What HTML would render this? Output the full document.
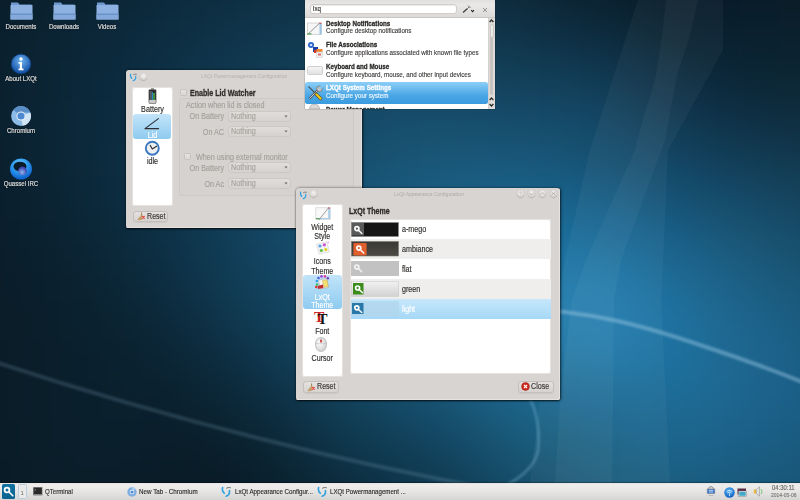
<!DOCTYPE html>
<html><head><meta charset="utf-8">
<style>
*{margin:0;padding:0;box-sizing:border-box}
html,body{width:800px;height:500px;overflow:hidden}
body{position:relative;font-family:"Liberation Sans",sans-serif;background:#0f3550}
.abs{position:absolute}
.tx{position:absolute;white-space:nowrap;-webkit-text-stroke:0.15px currentColor}
#wall{position:absolute;left:0;top:0}
.dt{text-shadow:0 0 1px #000,0 0 2px #000}

.win{position:absolute;background:#d8d4d1;border-radius:3px 3px 2px 2px;box-shadow:inset -1px -1px 0 #e6e2df,0 1px 2px rgba(0,0,0,.7),1px 0 3px rgba(0,0,0,.55)}
.wl{position:absolute;background:#fff;border-radius:3px;box-shadow:inset 0 0 0 1px #e4e1de}
.btn{position:absolute;border:1px solid #c3bfbc;border-radius:3px;background:linear-gradient(#e4e1df,#d6d2cf);box-shadow:0 1px 1px rgba(0,0,0,.06)}
.combo{position:absolute;border:1px solid #ccc8c5;border-radius:3px;background:linear-gradient(#e0ddda,#d6d2cf)}
.chk{position:absolute;border:1px solid #c6c2bf;border-radius:1.5px;background:linear-gradient(#e6e4e2,#d9d6d3)}
.tb{position:absolute;border-radius:50%;background:radial-gradient(circle at 50% 40%,#f6f5f4 0,#e2dfdd 45%,#c4c1be 100%);box-shadow:0 0.5px 1px rgba(0,0,0,.3)}
.sel{position:absolute;border-radius:3px;background:linear-gradient(#c2e4f9,#8fcbf0)}
</style></head><body>
<svg id="wall" width="800" height="500" viewBox="0 0 800 500">
<defs>
<filter id="fblur" x="-10%" y="-10%" width="120%" height="120%" color-interpolation-filters="sRGB"><feGaussianBlur stdDeviation="22"/></filter>
<filter id="bl05" color-interpolation-filters="sRGB"><feGaussianBlur stdDeviation="0.6"/></filter>
<filter id="bl1" color-interpolation-filters="sRGB"><feGaussianBlur stdDeviation="1"/></filter>
</defs>
<g filter="url(#fblur)"><rect x="-60" y="-60" width="41" height="41" fill="#091a24"/><rect x="-20" y="-60" width="41" height="41" fill="#091d28"/><rect x="20" y="-60" width="41" height="41" fill="#0a1f2c"/><rect x="60" y="-60" width="41" height="41" fill="#0a212f"/><rect x="100" y="-60" width="41" height="41" fill="#0b2433"/><rect x="140" y="-60" width="41" height="41" fill="#0b2636"/><rect x="180" y="-60" width="41" height="41" fill="#0c2939"/><rect x="220" y="-60" width="41" height="41" fill="#0d2b3c"/><rect x="260" y="-60" width="41" height="41" fill="#0e2c3e"/><rect x="300" y="-60" width="41" height="41" fill="#0e2d3e"/><rect x="340" y="-60" width="41" height="41" fill="#0e2d3e"/><rect x="380" y="-60" width="41" height="41" fill="#0e2b3c"/><rect x="420" y="-60" width="41" height="41" fill="#0e2938"/><rect x="460" y="-60" width="41" height="41" fill="#0d2634"/><rect x="500" y="-60" width="41" height="41" fill="#0c222f"/><rect x="540" y="-60" width="41" height="41" fill="#0a1e2a"/><rect x="580" y="-60" width="41" height="41" fill="#081b26"/><rect x="620" y="-60" width="41" height="41" fill="#071822"/><rect x="660" y="-60" width="41" height="41" fill="#061620"/><rect x="700" y="-60" width="41" height="41" fill="#061622"/><rect x="740" y="-60" width="41" height="41" fill="#071723"/><rect x="780" y="-60" width="41" height="41" fill="#081823"/><rect x="820" y="-60" width="41" height="41" fill="#091922"/><rect x="860" y="-60" width="41" height="41" fill="#091921"/><rect x="-60" y="-20" width="41" height="41" fill="#091c27"/><rect x="-20" y="-20" width="41" height="41" fill="#0a1e2b"/><rect x="20" y="-20" width="41" height="41" fill="#0a212f"/><rect x="60" y="-20" width="41" height="41" fill="#0b2433"/><rect x="100" y="-20" width="41" height="41" fill="#0b2738"/><rect x="140" y="-20" width="41" height="41" fill="#0c2a3c"/><rect x="180" y="-20" width="41" height="41" fill="#0d2d40"/><rect x="220" y="-20" width="41" height="41" fill="#0e3044"/><rect x="260" y="-20" width="41" height="41" fill="#0f3246"/><rect x="300" y="-20" width="41" height="41" fill="#103448"/><rect x="340" y="-20" width="41" height="41" fill="#103448"/><rect x="380" y="-20" width="41" height="41" fill="#103347"/><rect x="420" y="-20" width="41" height="41" fill="#103144"/><rect x="460" y="-20" width="41" height="41" fill="#0f2e40"/><rect x="500" y="-20" width="41" height="41" fill="#0e2a3b"/><rect x="540" y="-20" width="41" height="41" fill="#0c2636"/><rect x="580" y="-20" width="41" height="41" fill="#0b2231"/><rect x="620" y="-20" width="41" height="41" fill="#091f2c"/><rect x="660" y="-20" width="41" height="41" fill="#061a27"/><rect x="700" y="-20" width="41" height="41" fill="#081b2a"/><rect x="740" y="-20" width="41" height="41" fill="#091c2a"/><rect x="780" y="-20" width="41" height="41" fill="#0a1d29"/><rect x="820" y="-20" width="41" height="41" fill="#0a1e28"/><rect x="860" y="-20" width="41" height="41" fill="#0b1e28"/><rect x="-60" y="20" width="41" height="41" fill="#0a1d29"/><rect x="-20" y="20" width="41" height="41" fill="#0a202d"/><rect x="20" y="20" width="41" height="41" fill="#0b2332"/><rect x="60" y="20" width="41" height="41" fill="#0b2637"/><rect x="100" y="20" width="41" height="41" fill="#0c293b"/><rect x="140" y="20" width="41" height="41" fill="#0d2d41"/><rect x="180" y="20" width="41" height="41" fill="#0e3146"/><rect x="220" y="20" width="41" height="41" fill="#10354b"/><rect x="260" y="20" width="41" height="41" fill="#11384f"/><rect x="300" y="20" width="41" height="41" fill="#123b52"/><rect x="340" y="20" width="41" height="41" fill="#123c53"/><rect x="380" y="20" width="41" height="41" fill="#123c53"/><rect x="420" y="20" width="41" height="41" fill="#123a51"/><rect x="460" y="20" width="41" height="41" fill="#11384e"/><rect x="500" y="20" width="41" height="41" fill="#10354a"/><rect x="540" y="20" width="41" height="41" fill="#0f3045"/><rect x="580" y="20" width="41" height="41" fill="#0d2d40"/><rect x="620" y="20" width="41" height="41" fill="#0c283a"/><rect x="660" y="20" width="41" height="41" fill="#092231"/><rect x="700" y="20" width="41" height="41" fill="#092131"/><rect x="740" y="20" width="41" height="41" fill="#0a212f"/><rect x="780" y="20" width="41" height="41" fill="#0b212e"/><rect x="820" y="20" width="41" height="41" fill="#0c222e"/><rect x="860" y="20" width="41" height="41" fill="#0c222e"/><rect x="-60" y="60" width="41" height="41" fill="#0a1d2a"/><rect x="-20" y="60" width="41" height="41" fill="#0a202f"/><rect x="20" y="60" width="41" height="41" fill="#0b2434"/><rect x="60" y="60" width="41" height="41" fill="#0b2739"/><rect x="100" y="60" width="41" height="41" fill="#0c2b3f"/><rect x="140" y="60" width="41" height="41" fill="#0d3045"/><rect x="180" y="60" width="41" height="41" fill="#0f354b"/><rect x="220" y="60" width="41" height="41" fill="#113951"/><rect x="260" y="60" width="41" height="41" fill="#123e57"/><rect x="300" y="60" width="41" height="41" fill="#13415b"/><rect x="340" y="60" width="41" height="41" fill="#14435e"/><rect x="380" y="60" width="41" height="41" fill="#15455f"/><rect x="420" y="60" width="41" height="41" fill="#14445f"/><rect x="460" y="60" width="41" height="41" fill="#14435d"/><rect x="500" y="60" width="41" height="41" fill="#13405a"/><rect x="540" y="60" width="41" height="41" fill="#123f59"/><rect x="580" y="60" width="41" height="41" fill="#113b55"/><rect x="620" y="60" width="41" height="41" fill="#10344b"/><rect x="660" y="60" width="41" height="41" fill="#0d2d41"/><rect x="700" y="60" width="41" height="41" fill="#0c283a"/><rect x="740" y="60" width="41" height="41" fill="#0b2534"/><rect x="780" y="60" width="41" height="41" fill="#0c2634"/><rect x="820" y="60" width="41" height="41" fill="#0d2735"/><rect x="860" y="60" width="41" height="41" fill="#0e2836"/><rect x="-60" y="100" width="41" height="41" fill="#0a1e2a"/><rect x="-20" y="100" width="41" height="41" fill="#0a212f"/><rect x="20" y="100" width="41" height="41" fill="#0b2435"/><rect x="60" y="100" width="41" height="41" fill="#0c283a"/><rect x="100" y="100" width="41" height="41" fill="#0c2c40"/><rect x="140" y="100" width="41" height="41" fill="#0e3247"/><rect x="180" y="100" width="41" height="41" fill="#0f374f"/><rect x="220" y="100" width="41" height="41" fill="#113d56"/><rect x="260" y="100" width="41" height="41" fill="#13425d"/><rect x="300" y="100" width="41" height="41" fill="#154763"/><rect x="340" y="100" width="41" height="41" fill="#164b68"/><rect x="380" y="100" width="41" height="41" fill="#174d6b"/><rect x="420" y="100" width="41" height="41" fill="#174e6c"/><rect x="460" y="100" width="41" height="41" fill="#164d6b"/><rect x="500" y="100" width="41" height="41" fill="#164b6a"/><rect x="540" y="100" width="41" height="41" fill="#154a68"/><rect x="580" y="100" width="41" height="41" fill="#144765"/><rect x="620" y="100" width="41" height="41" fill="#13405b"/><rect x="660" y="100" width="41" height="41" fill="#113851"/><rect x="700" y="100" width="41" height="41" fill="#0f3349"/><rect x="740" y="100" width="41" height="41" fill="#0f2f43"/><rect x="780" y="100" width="41" height="41" fill="#0f2e40"/><rect x="820" y="100" width="41" height="41" fill="#0f2e40"/><rect x="860" y="100" width="41" height="41" fill="#102e3f"/><rect x="-60" y="140" width="41" height="41" fill="#0a1d2a"/><rect x="-20" y="140" width="41" height="41" fill="#0a202e"/><rect x="20" y="140" width="41" height="41" fill="#0b2434"/><rect x="60" y="140" width="41" height="41" fill="#0c283a"/><rect x="100" y="140" width="41" height="41" fill="#0d2d41"/><rect x="140" y="140" width="41" height="41" fill="#0e3248"/><rect x="180" y="140" width="41" height="41" fill="#103951"/><rect x="220" y="140" width="41" height="41" fill="#123f5a"/><rect x="260" y="140" width="41" height="41" fill="#144662"/><rect x="300" y="140" width="41" height="41" fill="#154b6a"/><rect x="340" y="140" width="41" height="41" fill="#175070"/><rect x="380" y="140" width="41" height="41" fill="#185475"/><rect x="420" y="140" width="41" height="41" fill="#195778"/><rect x="460" y="140" width="41" height="41" fill="#19577a"/><rect x="500" y="140" width="41" height="41" fill="#18577a"/><rect x="540" y="140" width="41" height="41" fill="#175578"/><rect x="580" y="140" width="41" height="41" fill="#165172"/><rect x="620" y="140" width="41" height="41" fill="#144b6b"/><rect x="660" y="140" width="41" height="41" fill="#134462"/><rect x="700" y="140" width="41" height="41" fill="#123f5a"/><rect x="740" y="140" width="41" height="41" fill="#123b54"/><rect x="780" y="140" width="41" height="41" fill="#12394f"/><rect x="820" y="140" width="41" height="41" fill="#12374c"/><rect x="860" y="140" width="41" height="41" fill="#12364a"/><rect x="-60" y="180" width="41" height="41" fill="#0a1d29"/><rect x="-20" y="180" width="41" height="41" fill="#0a1f2d"/><rect x="20" y="180" width="41" height="41" fill="#0b2232"/><rect x="60" y="180" width="41" height="41" fill="#0b2738"/><rect x="100" y="180" width="41" height="41" fill="#0c2c3f"/><rect x="140" y="180" width="41" height="41" fill="#0e3248"/><rect x="180" y="180" width="41" height="41" fill="#103951"/><rect x="220" y="180" width="41" height="41" fill="#12405c"/><rect x="260" y="180" width="41" height="41" fill="#144865"/><rect x="300" y="180" width="41" height="41" fill="#164f6e"/><rect x="340" y="180" width="41" height="41" fill="#185576"/><rect x="380" y="180" width="41" height="41" fill="#195a7d"/><rect x="420" y="180" width="41" height="41" fill="#1b5e83"/><rect x="460" y="180" width="41" height="41" fill="#1b6187"/><rect x="500" y="180" width="41" height="41" fill="#1b638a"/><rect x="540" y="180" width="41" height="41" fill="#19628a"/><rect x="580" y="180" width="41" height="41" fill="#175e87"/><rect x="620" y="180" width="41" height="41" fill="#15587e"/><rect x="660" y="180" width="41" height="41" fill="#155174"/><rect x="700" y="180" width="41" height="41" fill="#154c6c"/><rect x="740" y="180" width="41" height="41" fill="#154864"/><rect x="780" y="180" width="41" height="41" fill="#15445e"/><rect x="820" y="180" width="41" height="41" fill="#144059"/><rect x="860" y="180" width="41" height="41" fill="#143e55"/><rect x="-60" y="220" width="41" height="41" fill="#091c27"/><rect x="-20" y="220" width="41" height="41" fill="#0a1e2b"/><rect x="20" y="220" width="41" height="41" fill="#0a212f"/><rect x="60" y="220" width="41" height="41" fill="#0b2535"/><rect x="100" y="220" width="41" height="41" fill="#0c2a3c"/><rect x="140" y="220" width="41" height="41" fill="#0d3045"/><rect x="180" y="220" width="41" height="41" fill="#0f3850"/><rect x="220" y="220" width="41" height="41" fill="#12405b"/><rect x="260" y="220" width="41" height="41" fill="#144866"/><rect x="300" y="220" width="41" height="41" fill="#165070"/><rect x="340" y="220" width="41" height="41" fill="#185779"/><rect x="380" y="220" width="41" height="41" fill="#1a5d82"/><rect x="420" y="220" width="41" height="41" fill="#1c638a"/><rect x="460" y="220" width="41" height="41" fill="#1d6992"/><rect x="500" y="220" width="41" height="41" fill="#1d6d99"/><rect x="540" y="220" width="41" height="41" fill="#1c6f9d"/><rect x="580" y="220" width="41" height="41" fill="#1a6d9b"/><rect x="620" y="220" width="41" height="41" fill="#196692"/><rect x="660" y="220" width="41" height="41" fill="#1a5f86"/><rect x="700" y="220" width="41" height="41" fill="#1a597b"/><rect x="740" y="220" width="41" height="41" fill="#195373"/><rect x="780" y="220" width="41" height="41" fill="#174e6c"/><rect x="820" y="220" width="41" height="41" fill="#164965"/><rect x="860" y="220" width="41" height="41" fill="#164560"/><rect x="-60" y="260" width="41" height="41" fill="#091b26"/><rect x="-20" y="260" width="41" height="41" fill="#0a1d29"/><rect x="20" y="260" width="41" height="41" fill="#0a1f2d"/><rect x="60" y="260" width="41" height="41" fill="#0b2231"/><rect x="100" y="260" width="41" height="41" fill="#0b2737"/><rect x="140" y="260" width="41" height="41" fill="#0d2d40"/><rect x="180" y="260" width="41" height="41" fill="#0f354b"/><rect x="220" y="260" width="41" height="41" fill="#113e58"/><rect x="260" y="260" width="41" height="41" fill="#134663"/><rect x="300" y="260" width="41" height="41" fill="#164e6e"/><rect x="340" y="260" width="41" height="41" fill="#185678"/><rect x="380" y="260" width="41" height="41" fill="#1a5e82"/><rect x="420" y="260" width="41" height="41" fill="#1c658d"/><rect x="460" y="260" width="41" height="41" fill="#1e6d97"/><rect x="500" y="260" width="41" height="41" fill="#2074a2"/><rect x="540" y="260" width="41" height="41" fill="#2079a9"/><rect x="580" y="260" width="41" height="41" fill="#1f79aa"/><rect x="620" y="260" width="41" height="41" fill="#1e72a2"/><rect x="660" y="260" width="41" height="41" fill="#1e6a95"/><rect x="700" y="260" width="41" height="41" fill="#1d6389"/><rect x="740" y="260" width="41" height="41" fill="#1b5c7f"/><rect x="780" y="260" width="41" height="41" fill="#195677"/><rect x="820" y="260" width="41" height="41" fill="#185170"/><rect x="860" y="260" width="41" height="41" fill="#174c69"/><rect x="-60" y="300" width="41" height="41" fill="#091b25"/><rect x="-20" y="300" width="41" height="41" fill="#0a1d28"/><rect x="20" y="300" width="41" height="41" fill="#0a1e2b"/><rect x="60" y="300" width="41" height="41" fill="#0a212e"/><rect x="100" y="300" width="41" height="41" fill="#0b2433"/><rect x="140" y="300" width="41" height="41" fill="#0c283a"/><rect x="180" y="300" width="41" height="41" fill="#0e3044"/><rect x="220" y="300" width="41" height="41" fill="#103950"/><rect x="260" y="300" width="41" height="41" fill="#12415c"/><rect x="300" y="300" width="41" height="41" fill="#144a68"/><rect x="340" y="300" width="41" height="41" fill="#175273"/><rect x="380" y="300" width="41" height="41" fill="#195b7e"/><rect x="420" y="300" width="41" height="41" fill="#1c638a"/><rect x="460" y="300" width="41" height="41" fill="#1e6c96"/><rect x="500" y="300" width="41" height="41" fill="#2175a2"/><rect x="540" y="300" width="41" height="41" fill="#237dad"/><rect x="580" y="300" width="41" height="41" fill="#237eb0"/><rect x="620" y="300" width="41" height="41" fill="#2078a9"/><rect x="660" y="300" width="41" height="41" fill="#1f709e"/><rect x="700" y="300" width="41" height="41" fill="#1e6993"/><rect x="740" y="300" width="41" height="41" fill="#1c6289"/><rect x="780" y="300" width="41" height="41" fill="#1b5c80"/><rect x="820" y="300" width="41" height="41" fill="#195678"/><rect x="860" y="300" width="41" height="41" fill="#185171"/><rect x="-60" y="340" width="41" height="41" fill="#091b25"/><rect x="-20" y="340" width="41" height="41" fill="#0a1c28"/><rect x="20" y="340" width="41" height="41" fill="#0a1e2a"/><rect x="60" y="340" width="41" height="41" fill="#0a1f2d"/><rect x="100" y="340" width="41" height="41" fill="#0a212f"/><rect x="140" y="340" width="41" height="41" fill="#0b2433"/><rect x="180" y="340" width="41" height="41" fill="#0c293a"/><rect x="220" y="340" width="41" height="41" fill="#0e3145"/><rect x="260" y="340" width="41" height="41" fill="#103a52"/><rect x="300" y="340" width="41" height="41" fill="#13435e"/><rect x="340" y="340" width="41" height="41" fill="#154c6a"/><rect x="380" y="340" width="41" height="41" fill="#175475"/><rect x="420" y="340" width="41" height="41" fill="#1a5d81"/><rect x="460" y="340" width="41" height="41" fill="#1d668d"/><rect x="500" y="340" width="41" height="41" fill="#1f6f99"/><rect x="540" y="340" width="41" height="41" fill="#2176a3"/><rect x="580" y="340" width="41" height="41" fill="#2077a7"/><rect x="620" y="340" width="41" height="41" fill="#1e74a4"/><rect x="660" y="340" width="41" height="41" fill="#1e709d"/><rect x="700" y="340" width="41" height="41" fill="#1e6a95"/><rect x="740" y="340" width="41" height="41" fill="#1d658e"/><rect x="780" y="340" width="41" height="41" fill="#1b5f86"/><rect x="820" y="340" width="41" height="41" fill="#1a597e"/><rect x="860" y="340" width="41" height="41" fill="#195476"/><rect x="-60" y="380" width="41" height="41" fill="#091b25"/><rect x="-20" y="380" width="41" height="41" fill="#0a1c28"/><rect x="20" y="380" width="41" height="41" fill="#0a1e2a"/><rect x="60" y="380" width="41" height="41" fill="#0a1f2c"/><rect x="100" y="380" width="41" height="41" fill="#0a202d"/><rect x="140" y="380" width="41" height="41" fill="#0a202e"/><rect x="180" y="380" width="41" height="41" fill="#0b2332"/><rect x="220" y="380" width="41" height="41" fill="#0c293a"/><rect x="260" y="380" width="41" height="41" fill="#0e3145"/><rect x="300" y="380" width="41" height="41" fill="#113b52"/><rect x="340" y="380" width="41" height="41" fill="#13445e"/><rect x="380" y="380" width="41" height="41" fill="#154b68"/><rect x="420" y="380" width="41" height="41" fill="#175373"/><rect x="460" y="380" width="41" height="41" fill="#1a5c7f"/><rect x="500" y="380" width="41" height="41" fill="#1c658a"/><rect x="540" y="380" width="41" height="41" fill="#1d6991"/><rect x="580" y="380" width="41" height="41" fill="#1c6a94"/><rect x="620" y="380" width="41" height="41" fill="#1c6c97"/><rect x="660" y="380" width="41" height="41" fill="#1d6b96"/><rect x="700" y="380" width="41" height="41" fill="#1d6892"/><rect x="740" y="380" width="41" height="41" fill="#1c638d"/><rect x="780" y="380" width="41" height="41" fill="#1b5f86"/><rect x="820" y="380" width="41" height="41" fill="#1a5a7f"/><rect x="860" y="380" width="41" height="41" fill="#195577"/><rect x="-60" y="420" width="41" height="41" fill="#091a25"/><rect x="-20" y="420" width="41" height="41" fill="#091c27"/><rect x="20" y="420" width="41" height="41" fill="#0a1e2a"/><rect x="60" y="420" width="41" height="41" fill="#0a1f2c"/><rect x="100" y="420" width="41" height="41" fill="#0a1f2c"/><rect x="140" y="420" width="41" height="41" fill="#0a1e2b"/><rect x="180" y="420" width="41" height="41" fill="#0a1f2b"/><rect x="220" y="420" width="41" height="41" fill="#0b2230"/><rect x="260" y="420" width="41" height="41" fill="#0c2939"/><rect x="300" y="420" width="41" height="41" fill="#0e3245"/><rect x="340" y="420" width="41" height="41" fill="#103a50"/><rect x="380" y="420" width="41" height="41" fill="#114059"/><rect x="420" y="420" width="41" height="41" fill="#134662"/><rect x="460" y="420" width="41" height="41" fill="#17506e"/><rect x="500" y="420" width="41" height="41" fill="#195a7a"/><rect x="540" y="420" width="41" height="41" fill="#1a5e80"/><rect x="580" y="420" width="41" height="41" fill="#1a6185"/><rect x="620" y="420" width="41" height="41" fill="#1b648b"/><rect x="660" y="420" width="41" height="41" fill="#1c658c"/><rect x="700" y="420" width="41" height="41" fill="#1c628a"/><rect x="740" y="420" width="41" height="41" fill="#1b5e85"/><rect x="780" y="420" width="41" height="41" fill="#1a5b80"/><rect x="820" y="420" width="41" height="41" fill="#19587b"/><rect x="860" y="420" width="41" height="41" fill="#195476"/><rect x="-60" y="460" width="41" height="41" fill="#091924"/><rect x="-20" y="460" width="41" height="41" fill="#091b26"/><rect x="20" y="460" width="41" height="41" fill="#0a1d29"/><rect x="60" y="460" width="41" height="41" fill="#0a1e2a"/><rect x="100" y="460" width="41" height="41" fill="#0a1d2a"/><rect x="140" y="460" width="41" height="41" fill="#091c27"/><rect x="180" y="460" width="41" height="41" fill="#091b26"/><rect x="220" y="460" width="41" height="41" fill="#091d29"/><rect x="260" y="460" width="41" height="41" fill="#0a2230"/><rect x="300" y="460" width="41" height="41" fill="#0c293a"/><rect x="340" y="460" width="41" height="41" fill="#0d3043"/><rect x="380" y="460" width="41" height="41" fill="#0f354b"/><rect x="420" y="460" width="41" height="41" fill="#103c53"/><rect x="460" y="460" width="41" height="41" fill="#13455f"/><rect x="500" y="460" width="41" height="41" fill="#164f6b"/><rect x="540" y="460" width="41" height="41" fill="#185573"/><rect x="580" y="460" width="41" height="41" fill="#1a5b7b"/><rect x="620" y="460" width="41" height="41" fill="#1b5e80"/><rect x="660" y="460" width="41" height="41" fill="#1b5e82"/><rect x="700" y="460" width="41" height="41" fill="#1a5c80"/><rect x="740" y="460" width="41" height="41" fill="#1a597c"/><rect x="780" y="460" width="41" height="41" fill="#195779"/><rect x="820" y="460" width="41" height="41" fill="#195576"/><rect x="860" y="460" width="41" height="41" fill="#195272"/><rect x="-60" y="500" width="41" height="41" fill="#091822"/><rect x="-20" y="500" width="41" height="41" fill="#091a24"/><rect x="20" y="500" width="41" height="41" fill="#091b26"/><rect x="60" y="500" width="41" height="41" fill="#091b27"/><rect x="100" y="500" width="41" height="41" fill="#091b26"/><rect x="140" y="500" width="41" height="41" fill="#091924"/><rect x="180" y="500" width="41" height="41" fill="#081923"/><rect x="220" y="500" width="41" height="41" fill="#081a24"/><rect x="260" y="500" width="41" height="41" fill="#091e29"/><rect x="300" y="500" width="41" height="41" fill="#0a2331"/><rect x="340" y="500" width="41" height="41" fill="#0c2839"/><rect x="380" y="500" width="41" height="41" fill="#0d2e40"/><rect x="420" y="500" width="41" height="41" fill="#0f3549"/><rect x="460" y="500" width="41" height="41" fill="#113d53"/><rect x="500" y="500" width="41" height="41" fill="#14465e"/><rect x="540" y="500" width="41" height="41" fill="#164d68"/><rect x="580" y="500" width="41" height="41" fill="#18536f"/><rect x="620" y="500" width="41" height="41" fill="#195674"/><rect x="660" y="500" width="41" height="41" fill="#1a5777"/><rect x="700" y="500" width="41" height="41" fill="#195677"/><rect x="740" y="500" width="41" height="41" fill="#195575"/><rect x="780" y="500" width="41" height="41" fill="#195372"/><rect x="820" y="500" width="41" height="41" fill="#195170"/><rect x="860" y="500" width="41" height="41" fill="#18506e"/><rect x="-60" y="540" width="41" height="41" fill="#08171f"/><rect x="-20" y="540" width="41" height="41" fill="#081821"/><rect x="20" y="540" width="41" height="41" fill="#081822"/><rect x="60" y="540" width="41" height="41" fill="#081922"/><rect x="100" y="540" width="41" height="41" fill="#081822"/><rect x="140" y="540" width="41" height="41" fill="#081721"/><rect x="180" y="540" width="41" height="41" fill="#081720"/><rect x="220" y="540" width="41" height="41" fill="#081821"/><rect x="260" y="540" width="41" height="41" fill="#081b25"/><rect x="300" y="540" width="41" height="41" fill="#091f2a"/><rect x="340" y="540" width="41" height="41" fill="#0a2331"/><rect x="380" y="540" width="41" height="41" fill="#0c2939"/><rect x="420" y="540" width="41" height="41" fill="#0e2f41"/><rect x="460" y="540" width="41" height="41" fill="#10374a"/><rect x="500" y="540" width="41" height="41" fill="#123e54"/><rect x="540" y="540" width="41" height="41" fill="#15455d"/><rect x="580" y="540" width="41" height="41" fill="#164b64"/><rect x="620" y="540" width="41" height="41" fill="#184f6a"/><rect x="660" y="540" width="41" height="41" fill="#18506d"/><rect x="700" y="540" width="41" height="41" fill="#18516e"/><rect x="740" y="540" width="41" height="41" fill="#18506d"/><rect x="780" y="540" width="41" height="41" fill="#184f6c"/><rect x="820" y="540" width="41" height="41" fill="#184e6b"/><rect x="860" y="540" width="41" height="41" fill="#184d69"/></g>
<path d="M638,0 L590,150 L565,260 L540,400 L530,483 L670,483 L661,300 L663,260 L668,150 L723,50 L723,0 Z" fill="#ffffff" opacity="0.035" filter="url(#bl05)"/>
<path d="M666,0 C664,20 660,55 656,75 C652,90 650,100 647,105 L635,150 L586,260 L572,300 L560,400 L555,483 L612,483 L614,300 L621,260 L665,140 L677,75 L689,39 L698,0 Z" fill="#ffffff" opacity="0.035" filter="url(#bl05)"/>
<path d="M-10,360.3 Q245,444.2 500,490.7" stroke="#8fb4cc" stroke-width="4.2" fill="none" opacity="0.2" filter="url(#bl1)"/>
<path d="M520,309 C590,310 650,328 700,345 C740,358 770,369 805,383" stroke="#a4d0ea" stroke-width="4.2" fill="none" opacity="0.42" filter="url(#bl1)"/>
<path d="M530,399 C537,412 540,432 538,450 C536,464 524,476 505,486" stroke="#8ec4e2" stroke-width="3" fill="none" opacity="0.3" filter="url(#bl1)"/>

</svg>
<svg class="abs" style="left:10px;top:1px" width="23" height="19" viewBox="0 0 23 19">
<path d="M1,1.5 h7 l1.5,2 h12 v14.5 h-20.5z" fill="#6f98cf"/>
<rect x="0.5" y="4" width="22" height="14.5" rx="0.5" fill="#8db1e0"/>
<rect x="0.5" y="12.5" width="22" height="1.5" fill="#6a93c9"/>
<rect x="0.5" y="14" width="22" height="4.5" fill="#84a9da"/>
</svg>
<svg class="abs" style="left:53px;top:1px" width="23" height="19" viewBox="0 0 23 19">
<path d="M1,1.5 h7 l1.5,2 h12 v14.5 h-20.5z" fill="#6f98cf"/>
<rect x="0.5" y="4" width="22" height="14.5" rx="0.5" fill="#8db1e0"/>
<rect x="0.5" y="12.5" width="22" height="1.5" fill="#6a93c9"/>
<rect x="0.5" y="14" width="22" height="4.5" fill="#84a9da"/>
</svg>
<svg class="abs" style="left:96px;top:1px" width="23" height="19" viewBox="0 0 23 19">
<path d="M1,1.5 h7 l1.5,2 h12 v14.5 h-20.5z" fill="#6f98cf"/>
<rect x="0.5" y="4" width="22" height="14.5" rx="0.5" fill="#8db1e0"/>
<rect x="0.5" y="12.5" width="22" height="1.5" fill="#6a93c9"/>
<rect x="0.5" y="14" width="22" height="4.5" fill="#84a9da"/>
</svg>
<div class="tx" style="left:-4.5px;top:23.09px;font-size:7.20px;line-height:8.64px;color:#e2e2e2;width:59.00px;text-align:center;transform:scaleX(0.8475);transform-origin:0 0;text-shadow:0 0 1.5px rgba(0,0,0,.9);">Documents</div>
<div class="tx" style="left:38.5px;top:23.09px;font-size:7.20px;line-height:8.64px;color:#e2e2e2;width:59.00px;text-align:center;transform:scaleX(0.8475);transform-origin:0 0;text-shadow:0 0 1.5px rgba(0,0,0,.9);">Downloads</div>
<div class="tx" style="left:81.5px;top:23.09px;font-size:7.20px;line-height:8.64px;color:#e2e2e2;width:59.00px;text-align:center;transform:scaleX(0.8475);transform-origin:0 0;text-shadow:0 0 1.5px rgba(0,0,0,.9);">Videos</div>
<svg class="abs" style="left:10px;top:53px" width="22" height="22" viewBox="0 0 22 22">
<defs><radialGradient id="ab" cx="50%" cy="35%" r="60%"><stop offset="0" stop-color="#6fb4f0"/><stop offset="1" stop-color="#1452a8"/></radialGradient></defs>
<circle cx="11" cy="11" r="9.8" fill="url(#ab)" stroke="#0d3f86" stroke-width="0.6"/>
<circle cx="11" cy="6" r="1.7" fill="#fff"/>
<path d="M8.5,9 h3.5 v6.5 h1.5 v1.7 h-5 v-1.7 h1.3 v-4.8 h-1.3z" fill="#fff"/>
</svg>
<div class="tx" style="left:-4px;top:75.39px;font-size:7.20px;line-height:8.64px;color:#e2e2e2;width:59.00px;text-align:center;transform:scaleX(0.8475);transform-origin:0 0;text-shadow:0 0 1.5px rgba(0,0,0,.9);">About LXQt</div>
<svg class="abs" style="left:10px;top:105px" width="22" height="22" viewBox="0 0 22 22">
<circle cx="11" cy="11" r="9.9" fill="#8cbbe6"/>
<path d="M11,11 L3.3,4.9 A9.9,9.9 0 0 1 20.4,7.6 L11,7.6z" fill="#5a8cc6"/>
<path d="M11,11 L20.4,7.6 A9.9,9.9 0 0 1 12.6,20.8z" fill="#d2e5f5"/>
<circle cx="11" cy="11" r="4.5" fill="#eef4fb"/>
<circle cx="11" cy="11" r="3.6" fill="#4d88d2"/>
</svg>
<div class="tx" style="left:-4px;top:127.39px;font-size:7.20px;line-height:8.64px;color:#e2e2e2;width:59.00px;text-align:center;transform:scaleX(0.8475);transform-origin:0 0;text-shadow:0 0 1.5px rgba(0,0,0,.9);">Chromium</div>
<svg class="abs" style="left:9px;top:157px" width="24" height="24" viewBox="0 0 24 24">
<defs><radialGradient id="qs" cx="45%" cy="30%" r="70%"><stop offset="0" stop-color="#7fd4ff"/><stop offset="0.5" stop-color="#2b9af0"/><stop offset="1" stop-color="#0b5cc8"/></radialGradient>
<radialGradient id="qg" cx="45%" cy="65%" r="60%"><stop offset="0" stop-color="#8ab8f0"/><stop offset="1" stop-color="#3a3aa8"/></radialGradient></defs>
<ellipse cx="12" cy="12" rx="11" ry="10.6" fill="url(#qs)"/>
<ellipse cx="11" cy="9.5" rx="6.5" ry="4.8" fill="#0a1c2a"/>
<circle cx="13.5" cy="14" r="4.4" fill="url(#qg)"/>
</svg>
<div class="tx" style="left:-4px;top:180.39px;font-size:7.20px;line-height:8.64px;color:#e2e2e2;width:59.00px;text-align:center;transform:scaleX(0.8475);transform-origin:0 0;text-shadow:0 0 1.5px rgba(0,0,0,.9);">Quassel IRC</div>
<div class="win" style="left:126px;top:70px;width:236px;height:158px"></div>
<svg class="abs" style="left:129px;top:73px" width="9" height="9" viewBox="0 0 11 12"><path d="M1.6,1.5 C1.1,3.5 1.6,5.8 3.2,7.2" stroke="#36a3e0" stroke-width="1.7" fill="none" stroke-linecap="round"/><path d="M8.4,4.6 C8.8,6.8 8.6,9 5.2,10.2" stroke="#36a3e0" stroke-width="1.7" fill="none" stroke-linecap="round"/><path d="M5.2,2.3 C6.5,1.6 8,1.3 9.8,1.8" stroke="#444" stroke-width="0.8" fill="none"/></svg>
<div class="tb" style="left:140px;top:73px;width:7px;height:7px"></div>
<div class="tx" style="left:200.7px;top:73.07px;font-size:5.84px;line-height:7.01px;color:#bdb9b6;transform:scaleX(0.8475);transform-origin:0 0;">LXQt Powermanagement Configuration</div>
<div class="wl" style="left:132px;top:87px;width:41px;height:119px"></div>
<div class="sel" style="left:133px;top:114px;width:38px;height:25px"></div>
<svg class="abs" style="left:148px;top:88px" width="9" height="16" viewBox="0 0 9 16">
<rect x="3" y="0.3" width="3" height="1.5" fill="#777"/>
<rect x="0.8" y="1.5" width="7.4" height="14" rx="1" fill="#2b2b2b" stroke="#888" stroke-width="0.5"/>
<rect x="1.8" y="3" width="2" height="9" fill="#5d5d5d"/>
<rect x="5" y="5" width="2" height="7" fill="#3d8f3d"/>
<rect x="3.8" y="4" width="1.2" height="8" fill="#2a7fc0"/>
<rect x="1.2" y="12" width="6.6" height="3" fill="#c9c9c9"/>
</svg>
<div class="tx" style="left:132px;top:103.56px;font-size:8.50px;line-height:10.2px;color:#2e2c2a;width:48.38px;text-align:center;transform:scaleX(0.8475);transform-origin:0 0;">Battery</div>
<svg class="abs" style="left:143px;top:117px" width="18" height="14" viewBox="0 0 18 14"><path d="M2,11.6 L15.4,1.6 M2,11.6 H15.6" stroke="#2f2f33" stroke-width="1.1" fill="none" stroke-linecap="round"/></svg>
<div class="tx" style="left:132px;top:129.56px;font-size:8.50px;line-height:10.2px;color:#ffffff;width:48.38px;text-align:center;transform:scaleX(0.8475);transform-origin:0 0;">Lid</div>
<svg class="abs" style="left:144px;top:140px" width="16" height="16" viewBox="0 0 16 16">
<circle cx="8.3" cy="8.2" r="6.5" fill="#eeeff0" stroke="#3a78c0" stroke-width="1.9"/>
<path d="M8.3,9 L6.2,5.4 M8.3,9 L12.6,6.2" stroke="#2e2e2e" stroke-width="1.1" fill="none" stroke-linecap="round"/>
</svg>
<div class="tx" style="left:132px;top:155.56px;font-size:8.50px;line-height:10.2px;color:#2e2c2a;width:48.38px;text-align:center;transform:scaleX(0.8475);transform-origin:0 0;">idle</div>
<div class="btn" style="left:132.5px;top:210.5px;width:35.5px;height:11.5px"></div>
<svg class="abs" style="left:136.5px;top:211.5px" width="9" height="9" viewBox="0 0 9 9"><path d="M4.6,0.3 L4.2,3 L0.3,7.8 C1.5,8.6 3.5,8.4 5.2,7.6 L5.3,3.2z" fill="#c4a06a"/><path d="M4.3,0.3 L4.9,0.3 L5.1,3.2 L4.2,3.2z" fill="#9a7a4a"/><path d="M5.2,4.2 L7.6,6.6 M7.6,4.2 L5.2,6.6" stroke="#e8302a" stroke-width="1.1"/></svg>
<div class="tx" style="left:146.7px;top:210.77px;font-size:8.38px;line-height:10.05px;color:#3a3937;transform:scaleX(0.8475);transform-origin:0 0;">Reset</div>
<div class="chk" style="left:180px;top:89px;width:7px;height:7px"></div>
<div class="tx" style="left:190px;top:87.67px;font-size:8.38px;line-height:10.05px;color:#2f2d2b;font-weight:bold;-webkit-text-stroke:0.3px #2f2d2b;transform:scaleX(0.8475);transform-origin:0 0;">Enable Lid Watcher</div>
<div class="abs" style="left:179px;top:98px;width:175px;height:98px;border:1px solid #cecac7;border-radius:2px;background:#d6d2cf"></div>
<div class="tx" style="left:186px;top:100.06px;font-size:8.50px;line-height:10.2px;color:#a29f9b;transform:scaleX(0.8475);transform-origin:0 0;">Action when lid is closed</div>
<div class="tx" style="left:174px;top:110.96px;font-size:8.50px;line-height:10.2px;color:#a29f9b;width:59.00px;text-align:right;transform:scaleX(0.8475);transform-origin:0 0;">On Battery</div>
<div class="combo" style="left:228px;top:110.5px;width:63px;height:11px"></div><div class="tx" style="left:230.5px;top:110.96px;font-size:8.50px;line-height:10.2px;color:#a6a39f;transform:scaleX(0.8475);transform-origin:0 0;">Nothing</div><svg class="abs" style="left:283.5px;top:114.8px" width="4" height="3" viewBox="0 0 4 3"><path d="M0.4,0.6 L3.6,0.6 L2,2.4z" fill="#6e6b68"/></svg>
<div class="tx" style="left:174px;top:126.56px;font-size:8.50px;line-height:10.2px;color:#a29f9b;width:59.00px;text-align:right;transform:scaleX(0.8475);transform-origin:0 0;">On AC</div>
<div class="combo" style="left:228px;top:126px;width:63px;height:11px"></div><div class="tx" style="left:230.5px;top:126.46px;font-size:8.50px;line-height:10.2px;color:#a6a39f;transform:scaleX(0.8475);transform-origin:0 0;">Nothing</div><svg class="abs" style="left:283.5px;top:130.3px" width="4" height="3" viewBox="0 0 4 3"><path d="M0.4,0.6 L3.6,0.6 L2,2.4z" fill="#6e6b68"/></svg>
<div class="chk" style="left:184px;top:153px;width:7px;height:7px"></div>
<div class="tx" style="left:196px;top:151.56px;font-size:8.50px;line-height:10.2px;color:#a29f9b;transform:scaleX(0.8475);transform-origin:0 0;">When using external monitor</div>
<div class="tx" style="left:174px;top:162.56px;font-size:8.50px;line-height:10.2px;color:#a29f9b;width:59.00px;text-align:right;transform:scaleX(0.8475);transform-origin:0 0;">On Battery</div>
<div class="combo" style="left:228px;top:162px;width:63px;height:11px"></div><div class="tx" style="left:230.5px;top:162.46px;font-size:8.50px;line-height:10.2px;color:#a6a39f;transform:scaleX(0.8475);transform-origin:0 0;">Nothing</div><svg class="abs" style="left:283.5px;top:166.3px" width="4" height="3" viewBox="0 0 4 3"><path d="M0.4,0.6 L3.6,0.6 L2,2.4z" fill="#6e6b68"/></svg>
<div class="tx" style="left:174px;top:178.56px;font-size:8.50px;line-height:10.2px;color:#a29f9b;width:59.00px;text-align:right;transform:scaleX(0.8475);transform-origin:0 0;">On Ac</div>
<div class="combo" style="left:228px;top:177.5px;width:63px;height:11px"></div><div class="tx" style="left:230.5px;top:177.96px;font-size:8.50px;line-height:10.2px;color:#a6a39f;transform:scaleX(0.8475);transform-origin:0 0;">Nothing</div><svg class="abs" style="left:283.5px;top:181.8px" width="4" height="3" viewBox="0 0 4 3"><path d="M0.4,0.6 L3.6,0.6 L2,2.4z" fill="#6e6b68"/></svg>
<div class="abs" style="left:305px;top:0;width:190px;height:109px;background:#fff;box-shadow:0 0 1px rgba(0,0,0,.6)"></div>
<div class="abs" style="left:0;top:0;width:800px;height:500px;clip-path:inset(0px 305px 391px 305px)">
<div class="abs" style="left:305px;top:0;width:190px;height:18px;background:linear-gradient(#e2e0de,#eae8e6 30%,#dcdad8);border-bottom:1px solid #c9c6c3"></div>
<div class="abs" style="left:310px;top:4px;width:147px;height:9.5px;background:#fff;border:1px solid #cfccc9;border-radius:3px;box-shadow:inset 0 1px 1px rgba(0,0,0,.08)"></div>
<div class="tx" style="left:312.5px;top:5.28px;font-size:7.32px;line-height:8.78px;color:#2c2b2a;transform:scaleX(0.8475);transform-origin:0 0;">lxq</div>
<svg class="abs" style="left:462px;top:4px" width="13" height="10" viewBox="0 0 13 10"><path d="M1.5,8 L5,5" stroke="#444" stroke-width="1.5" stroke-linecap="round"/><path d="M5,5 L7.5,2.5 M6,1.5 L8.5,4" stroke="#777" stroke-width="1"/><path d="M9.2,6.2 L10.6,7.6 L12,6.2" stroke="#222" stroke-width="1.1" fill="none"/></svg>
<svg class="abs" style="left:482px;top:7px" width="6" height="6" viewBox="0 0 6 6"><path d="M1,1 L5,5 M5,1 L1,5" stroke="#8a8a8a" stroke-width="0.9"/></svg>
<div class="abs" style="left:488px;top:18px;width:7px;height:91px;background:#dedbd8;border-left:1px solid #d2cfcc"></div>
<div class="abs" style="left:490px;top:26px;width:3px;height:69px;background:#c6c3c0;border-radius:1.5px"></div>
<div class="abs" style="left:489.5px;top:24px;width:4.5px;height:14px;background:linear-gradient(90deg,#e8e6e4,#f2f1f0,#e0dedc);border:1px solid #cbc8c5;border-radius:2px"></div>
<svg class="abs" style="left:489px;top:19px" width="5" height="4" viewBox="0 0 5 4"><path d="M0.6,3 L2.5,1 L4.4,3" stroke="#2a2a2a" stroke-width="1.3" fill="none"/></svg>
<svg class="abs" style="left:489px;top:97px" width="5" height="4" viewBox="0 0 5 4"><path d="M0.6,3 L2.5,1 L4.4,3" stroke="#2a2a2a" stroke-width="1.3" fill="none"/></svg>
<svg class="abs" style="left:489px;top:103px" width="5" height="4" viewBox="0 0 5 4"><path d="M0.6,1 L2.5,3 L4.4,1" stroke="#2a2a2a" stroke-width="1.3" fill="none"/></svg>
<div class="abs" style="left:305px;top:82px;width:182.5px;height:21.5px;border-radius:2.5px;background:linear-gradient(#8ccff8,#4aa6e4 60%,#3a9be0)"></div>
<div class="tx" style="left:326.3px;top:19.52px;font-size:7.38px;line-height:8.85px;color:#2b2a28;font-weight:bold;-webkit-text-stroke:0.3px #2b2a28;transform:scaleX(0.8475);transform-origin:0 0;">Desktop Notifications</div>
<div class="tx" style="left:326.3px;top:27.32px;font-size:7.38px;line-height:8.85px;color:#3f3d3b;transform:scaleX(0.8475);transform-origin:0 0;">Configure desktop notifications</div>
<div class="tx" style="left:326.3px;top:41.12px;font-size:7.38px;line-height:8.85px;color:#2b2a28;font-weight:bold;-webkit-text-stroke:0.3px #2b2a28;transform:scaleX(0.8475);transform-origin:0 0;">File Associations</div>
<div class="tx" style="left:326.3px;top:48.92px;font-size:7.38px;line-height:8.85px;color:#3f3d3b;transform:scaleX(0.8475);transform-origin:0 0;">Configure applications associated with known file types</div>
<div class="tx" style="left:326.3px;top:62.72px;font-size:7.38px;line-height:8.85px;color:#2b2a28;font-weight:bold;-webkit-text-stroke:0.3px #2b2a28;transform:scaleX(0.8475);transform-origin:0 0;">Keyboard and Mouse</div>
<div class="tx" style="left:326.3px;top:70.52px;font-size:7.38px;line-height:8.85px;color:#3f3d3b;transform:scaleX(0.8475);transform-origin:0 0;">Configure keyboard, mouse, and other input devices</div>
<div class="tx" style="left:326.3px;top:84.32px;font-size:7.38px;line-height:8.85px;color:#ffffff;font-weight:bold;-webkit-text-stroke:0.3px #ffffff;transform:scaleX(0.8475);transform-origin:0 0;">LXQt System Settings</div>
<div class="tx" style="left:326.3px;top:92.12px;font-size:7.38px;line-height:8.85px;color:#f0f8ff;transform:scaleX(0.8475);transform-origin:0 0;">Configure your system</div>
<div class="tx" style="left:326.3px;top:105.92px;font-size:7.38px;line-height:8.85px;color:#2b2a28;font-weight:bold;-webkit-text-stroke:0.3px #2b2a28;transform:scaleX(0.8475);transform-origin:0 0;">Power Management</div>
<div class="tx" style="left:326.3px;top:113.72px;font-size:7.38px;line-height:8.85px;color:#3f3d3b;transform:scaleX(0.8475);transform-origin:0 0;">Configure power management</div>
<svg class="abs" style="left:306px;top:22px" width="17" height="14" viewBox="0 0 17 14">
<rect x="1.5" y="1" width="14" height="11.5" fill="#f6f6f6" stroke="#bdbdbd" stroke-width="0.6"/>
<rect x="13.5" y="1" width="2" height="11.5" fill="#9cc4e4"/>
<path d="M1.5,12.5 L13.8,1" stroke="#555" stroke-width="0.6"/>
<rect x="1.5" y="11.3" width="4" height="1.2" fill="#4ca04c"/>
<rect x="13.4" y="0.7" width="2" height="1" fill="#e04040"/>
</svg>
<svg class="abs" style="left:307px;top:41px" width="16" height="17" viewBox="0 0 16 17">
<circle cx="4" cy="4" r="3" fill="#2a62c8"/><circle cx="4" cy="4" r="1.3" fill="#c8dcff"/>
<rect x="6" y="6" width="5" height="5" fill="#1c3fa8"/><rect x="7" y="9" width="3" height="3" fill="#d83a2a"/>
<rect x="9.5" y="8" width="6" height="3" fill="#f08a30"/>
<rect x="9.5" y="11" width="6" height="5.5" fill="#f0f0f0" stroke="#ccc" stroke-width="0.5"/>
<rect x="11" y="12.5" width="3" height="2" fill="#e07070"/>
</svg>
<div class="abs" style="left:306.5px;top:66px;width:16px;height:9px;border:1px solid #cfcfcf;border-radius:1.5px;background:linear-gradient(#f4f4f4,#e2e2e2)"></div>
<svg class="abs" style="left:306.5px;top:85px" width="17" height="16" viewBox="0 0 17 16">
<path d="M2.8,13.2 L10.2,5.8" stroke="#5a5a5a" stroke-width="2.2" stroke-linecap="round"/>
<path d="M2.8,13.2 L10.2,5.8" stroke="#c8c8c8" stroke-width="1" stroke-linecap="round"/>
<circle cx="12.4" cy="3.9" r="2.8" fill="#c4c4c4" stroke="#555" stroke-width="0.6"/><path d="M12.6,3.7 L16,0.3" stroke="#84c8f5" stroke-width="1.9"/>
<path d="M1.8,1.8 L8.2,8.2" stroke="#4a4a4a" stroke-width="1.2" stroke-linecap="round"/>
<path d="M9.3,9.3 L13.6,13.6" stroke="#3a3a20" stroke-width="3.2" stroke-linecap="round"/>
<path d="M9.3,9.3 L13.6,13.6" stroke="#f2c618" stroke-width="2.2" stroke-linecap="round"/>
</svg>
<svg class="abs" style="left:307px;top:104px" width="15" height="5" viewBox="0 0 15 5"><path d="M2.5,5 A5,5 0 0 1 12.5,5z" fill="#d8d8d8" stroke="#999" stroke-width="0.6"/></svg>
</div>
<div class="win" style="left:296px;top:188px;width:264px;height:212px"></div>
<svg class="abs" style="left:299px;top:190.5px" width="9" height="9" viewBox="0 0 11 12"><path d="M1.6,1.5 C1.1,3.5 1.6,5.8 3.2,7.2" stroke="#36a3e0" stroke-width="1.7" fill="none" stroke-linecap="round"/><path d="M8.4,4.6 C8.8,6.8 8.6,9 5.2,10.2" stroke="#36a3e0" stroke-width="1.7" fill="none" stroke-linecap="round"/><path d="M5.2,2.3 C6.5,1.6 8,1.3 9.8,1.8" stroke="#444" stroke-width="0.8" fill="none"/></svg>
<div class="tb" style="left:310px;top:190px;width:7px;height:7px"></div>
<div class="tx" style="left:393.5px;top:190.72px;font-size:5.90px;line-height:7.08px;color:#b9b5b2;transform:scaleX(0.8475);transform-origin:0 0;">LxQt Appearance Configuration</div>
<div class="tb" style="left:516.5px;top:190px;width:7px;height:7px"></div>
<div class="tb" style="left:527.5px;top:190px;width:7px;height:7px"></div>
<div class="tb" style="left:538.5px;top:190px;width:7px;height:7px"></div>
<div class="tb" style="left:549.5px;top:190px;width:7px;height:7px"></div>
<svg class="abs" style="left:516.5px;top:190px" width="40" height="7" viewBox="0 0 40 7">
<path d="M2.6,2.6 C2.6,1.6 4.4,1.6 4.4,2.6 C4.4,3.3 3.5,3.3 3.5,4.2 M3.5,5 v0.3" stroke="#9c9895" stroke-width="0.6" fill="none"/>
<path d="M12.3,3 L14.5,4.6 L16.7,3" stroke="#9c9895" stroke-width="0.7" fill="none"/>
<path d="M23.3,4.3 L25.5,2.7 L27.7,4.3" stroke="#9c9895" stroke-width="0.7" fill="none"/>
<path d="M34.5,2 L38.5,5 M38.5,2 L34.5,5" stroke="#9c9895" stroke-width="0.7" fill="none"/>
</svg>
<div class="wl" style="left:302px;top:204px;width:40.5px;height:173px"></div>
<div class="sel" style="left:303px;top:275px;width:38.5px;height:34px"></div>
<svg class="abs" style="left:314.5px;top:207px" width="16" height="13" viewBox="0 0 16 13">
<rect x="0.8" y="0.8" width="14.4" height="11.4" fill="#f8f8f8" stroke="#c8c8c8" stroke-width="0.6"/>
<rect x="13.2" y="1" width="2" height="11" fill="#a8cce8"/>
<rect x="1" y="11" width="14" height="1.2" fill="#a8cce8"/>
<path d="M4,12.8 L13.8,0.4" stroke="#555" stroke-width="0.55"/>
<rect x="1" y="11" width="3.5" height="1.2" fill="#58a858"/>
<rect x="13" y="0.6" width="2.2" height="0.9" fill="#e05050"/>
</svg>
<div class="tx" style="left:302px;top:221.67px;font-size:8.38px;line-height:10.05px;color:#2e2c2a;width:47.79px;text-align:center;transform:scaleX(0.8475);transform-origin:0 0;">Widget</div>
<div class="tx" style="left:302px;top:230.77px;font-size:8.38px;line-height:10.05px;color:#2e2c2a;width:47.79px;text-align:center;transform:scaleX(0.8475);transform-origin:0 0;">Style</div>
<svg class="abs" style="left:314.5px;top:241px" width="16" height="14" viewBox="0 0 16 14">
<path d="M1.5,3 L12,0.8 L14.5,11 L4,13.2z" fill="#f2f2f2" stroke="#cfcfcf" stroke-width="0.5"/>
<circle cx="5" cy="5" r="1.6" fill="#5aa0e8"/><circle cx="9.3" cy="3.8" r="1.6" fill="#d050d0"/>
<circle cx="6.3" cy="9.5" r="1.6" fill="#60c040"/><circle cx="10.8" cy="8.6" r="1.6" fill="#e0d020"/>
<circle cx="13.2" cy="1.5" r="1" fill="#f0b0f0"/>
</svg>
<div class="tx" style="left:302px;top:256.47px;font-size:8.38px;line-height:10.05px;color:#2e2c2a;width:47.79px;text-align:center;transform:scaleX(0.8475);transform-origin:0 0;">Icons</div>
<div class="tx" style="left:302px;top:265.67px;font-size:8.38px;line-height:10.05px;color:#2e2c2a;width:47.79px;text-align:center;transform:scaleX(0.8475);transform-origin:0 0;">Theme</div>
<svg class="abs" style="left:314px;top:275px" width="17" height="15" viewBox="0 0 17 15">
<circle cx="3" cy="9.5" r="1.3" fill="#3cc060"/><circle cx="2.8" cy="6" r="1.3" fill="#30a0f0"/><circle cx="4.5" cy="3" r="1.3" fill="#5060e0"/>
<circle cx="7.5" cy="1.4" r="1.3" fill="#a040d0"/><circle cx="11" cy="1.4" r="1.3" fill="#e040a0"/><circle cx="13.8" cy="3.2" r="1.3" fill="#7040c0"/>
<circle cx="2.2" cy="12" r="1.2" fill="#e03030"/>
<path d="M4.5,5 L12.5,3.5 L14.5,12.5 L6,14z" fill="#f4f4f4" stroke="#a0a0a0" stroke-width="0.5"/>
<path d="M3.5,11 L9,9.5 L9.5,13 L4,14z" fill="#c03030"/>
<path d="M8.5,5.5 L13,4.8 L14.3,11.5 L10,12.3z" fill="#f2e070" stroke="#b8a040" stroke-width="0.4"/>
</svg>
<div class="tx" style="left:302px;top:291.57px;font-size:8.38px;line-height:10.05px;color:#ffffff;width:47.79px;text-align:center;transform:scaleX(0.8475);transform-origin:0 0;">LxQt</div>
<div class="tx" style="left:302px;top:299.97px;font-size:8.38px;line-height:10.05px;color:#ffffff;width:47.79px;text-align:center;transform:scaleX(0.8475);transform-origin:0 0;">Theme</div>
<svg class="abs" style="left:312px;top:306.5px" width="20" height="18" viewBox="0 0 20 18">
<text x="2" y="15" font-family="Liberation Serif" font-weight="bold" font-size="15.5" fill="#c82222">T</text>
<text x="5.5" y="16.5" font-family="Liberation Serif" font-weight="bold" font-size="15" fill="#121212">T</text>
</svg>
<div class="tx" style="left:302px;top:325.67px;font-size:8.38px;line-height:10.05px;color:#2e2c2a;width:47.79px;text-align:center;transform:scaleX(0.8475);transform-origin:0 0;">Font</div>
<svg class="abs" style="left:314px;top:336.5px" width="14" height="15" viewBox="0 0 14 15">
<defs><radialGradient id="ms" cx="40%" cy="40%" r="70%"><stop offset="0" stop-color="#ffffff"/><stop offset="1" stop-color="#c8c8c8"/></radialGradient></defs>
<path d="M7,0.6 C10.5,0.6 12.5,3 12.5,7 C12.5,11.5 10.5,14.4 7,14.4 C3.5,14.4 1.5,11.5 1.5,7 C1.5,3 3.5,0.6 7,0.6z" fill="url(#ms)" stroke="#a8a8a8" stroke-width="0.6"/>
<path d="M7,1 V6 M2,6.2 C5,7 9,7 12,6.2" stroke="#b0b0b0" stroke-width="0.5" fill="none"/>
<rect x="6.2" y="2.5" width="1.6" height="3" rx="0.6" fill="#d03030"/>
</svg>
<div class="tx" style="left:302px;top:352.67px;font-size:8.38px;line-height:10.05px;color:#2e2c2a;width:47.79px;text-align:center;transform:scaleX(0.8475);transform-origin:0 0;">Cursor</div>
<div class="tx" style="left:349px;top:205.93px;font-size:8.32px;line-height:9.98px;color:#2f2d2b;font-weight:bold;-webkit-text-stroke:0.3px #2f2d2b;transform:scaleX(0.8475);transform-origin:0 0;">LxQt Theme</div>
<div class="wl" style="left:349.5px;top:218.5px;width:201.5px;height:155.5px"></div>
<div class="tx" style="left:402px;top:224.42px;font-size:8.44px;line-height:10.12px;color:#2e2c2a;transform:scaleX(0.8475);transform-origin:0 0;">a-mego</div>
<div class="abs" style="left:350.5px;top:239px;width:200px;height:20px;background:#efeeed"></div>
<div class="tx" style="left:402px;top:244.42px;font-size:8.44px;line-height:10.12px;color:#2e2c2a;transform:scaleX(0.8475);transform-origin:0 0;">ambiance</div>
<div class="tx" style="left:402px;top:264.42px;font-size:8.44px;line-height:10.12px;color:#2e2c2a;transform:scaleX(0.8475);transform-origin:0 0;">flat</div>
<div class="abs" style="left:350.5px;top:279px;width:200px;height:20px;background:#efeeed"></div>
<div class="tx" style="left:402px;top:284.42px;font-size:8.44px;line-height:10.12px;color:#2e2c2a;transform:scaleX(0.8475);transform-origin:0 0;">green</div>
<div class="abs" style="left:350.5px;top:299px;width:200px;height:20px;background:linear-gradient(#c6e7fb,#a6d8f6)"></div>
<div class="tx" style="left:402px;top:304.42px;font-size:8.44px;line-height:10.12px;color:#ffffff;transform:scaleX(0.8475);transform-origin:0 0;">light</div>
<svg class="abs" style="left:351px;top:221.5px" width="48" height="15" viewBox="0 0 48 15"><rect x="0.5" y="0.5" width="47" height="14" fill="#151515" stroke="#8a8a8a" stroke-width="0.6"/><rect x="1" y="1" width="12" height="12.6" fill="#5a5a5a"/><g transform="translate(1.6,2.2)"><circle cx="4.3" cy="4.5" r="2" fill="none" stroke="#fff" stroke-width="1.7"/><path d="M5.9,6.1 L9.2,9.3" stroke="#fff" stroke-width="1.4" stroke-linecap="round"/></g></svg>
<svg class="abs" style="left:351px;top:241px" width="48" height="15.5" viewBox="0 0 48 15.5"><defs><linearGradient id="amb" x1="0" y1="0" x2="0" y2="1"><stop offset="0" stop-color="#3a3935"/><stop offset="1" stop-color="#4c4a42"/></linearGradient></defs><rect x="0.5" y="0.5" width="47" height="14.5" fill="url(#amb)" stroke="#7a7872" stroke-width="0.6"/><rect x="2.4" y="2" width="13.2" height="12.4" rx="1.2" fill="#e2602e"/><g transform="translate(3.5,2.6)"><circle cx="4.3" cy="4.5" r="2" fill="none" stroke="#fff" stroke-width="1.7"/><path d="M5.9,6.1 L9.2,9.3" stroke="#fff" stroke-width="1.4" stroke-linecap="round"/></g></svg>
<svg class="abs" style="left:351px;top:261px" width="48" height="15" viewBox="0 0 48 15"><rect x="0" y="0" width="48" height="15" fill="#c2c2c2"/><g transform="translate(1.5,1.5)"><circle cx="4.3" cy="4.5" r="2" fill="none" stroke="#f4f4f4" stroke-width="1.7"/><path d="M5.9,6.1 L9.2,9.3" stroke="#f4f4f4" stroke-width="1.4" stroke-linecap="round"/></g></svg>
<svg class="abs" style="left:351px;top:281px" width="48" height="15.5" viewBox="0 0 48 15.5"><defs><linearGradient id="grn" x1="0" y1="0" x2="0" y2="1"><stop offset="0" stop-color="#f2f2f2"/><stop offset="1" stop-color="#d2d2d2"/></linearGradient></defs><rect x="0.3" y="0.3" width="47.4" height="15" fill="url(#grn)" stroke="#c4c4c4" stroke-width="0.5"/><rect x="2" y="2" width="10.5" height="11.5" fill="#3c8c1c"/><g transform="translate(2.3,2.5)"><circle cx="4.3" cy="4.5" r="2" fill="none" stroke="#fff" stroke-width="1.7"/><path d="M5.9,6.1 L9.2,9.3" stroke="#fff" stroke-width="1.4" stroke-linecap="round"/></g></svg>
<svg class="abs" style="left:351px;top:300.5px" width="48" height="15" viewBox="0 0 48 15"><rect x="0" y="0" width="48" height="15" fill="#b2d6ec" opacity="0.8"/><rect x="1" y="2" width="11.5" height="11" fill="#2a78a8"/><g transform="translate(1.5,2.3)"><circle cx="4.3" cy="4.5" r="2" fill="none" stroke="#fff" stroke-width="1.7"/><path d="M5.9,6.1 L9.2,9.3" stroke="#fff" stroke-width="1.4" stroke-linecap="round"/></g></svg>
<div class="btn" style="left:302.5px;top:381px;width:36px;height:12px"></div>
<svg class="abs" style="left:306.5px;top:382.5px" width="9" height="9" viewBox="0 0 9 9"><path d="M4.6,0.3 L4.2,3 L0.3,7.8 C1.5,8.6 3.5,8.4 5.2,7.6 L5.3,3.2z" fill="#c4a06a"/><path d="M4.3,0.3 L4.9,0.3 L5.1,3.2 L4.2,3.2z" fill="#9a7a4a"/><path d="M5.2,4.2 L7.6,6.6 M7.6,4.2 L5.2,6.6" stroke="#e8302a" stroke-width="1.1"/></svg>
<div class="tx" style="left:316.5px;top:381.07px;font-size:8.38px;line-height:10.05px;color:#3a3937;transform:scaleX(0.8475);transform-origin:0 0;">Reset</div>
<div class="btn" style="left:517.5px;top:381px;width:36.5px;height:12px"></div>
<svg class="abs" style="left:521px;top:382px" width="9" height="9" viewBox="0 0 9 9"><circle cx="4.5" cy="4.5" r="3.9" fill="#d42a1e" stroke="#8e1a12" stroke-width="0.5"/><path d="M3,3 L6,6 M6,3 L3,6" stroke="#fff" stroke-width="1.1"/></svg>
<div class="tx" style="left:531.3px;top:381.07px;font-size:8.38px;line-height:10.05px;color:#3a3937;transform:scaleX(0.8475);transform-origin:0 0;">Close</div>
<div class="abs" style="left:0;top:483px;width:800px;height:17px;background:linear-gradient(#e4e3e1,#efeeec 12%,#e6e5e3 50%,#d6d5d3);box-shadow:0 -1px 1px rgba(0,0,0,.25)"></div>
<div class="abs" style="left:2px;top:484px;width:13px;height:15px;border-radius:1.5px;background:linear-gradient(#0f72a0,#0b6390)"></div>
<svg class="abs" style="left:1.5px;top:484.5px" width="13" height="13" viewBox="0 0 13 13"><circle cx="5" cy="5" r="2.4" fill="none" stroke="#fff" stroke-width="1.8"/><path d="M6.8,6.8 L10.8,10.8" stroke="#fff" stroke-width="1.6" stroke-linecap="round"/></svg>
<div class="abs" style="left:18px;top:484px;width:8.5px;height:15px;border:1px solid #b8cde0;border-radius:1.5px;background:#eceae8"></div>
<div class="tx" style="left:18px;top:489.09px;font-size:6.14px;line-height:7.36px;color:#7a7a7a;width:10.03px;text-align:center;transform:scaleX(0.8475);transform-origin:0 0;">1</div>
<svg class="abs" style="left:32.5px;top:486.5px" width="10" height="9" viewBox="0 0 10 9"><rect x="0" y="0" width="9.5" height="8.5" rx="0.6" fill="#8a8a8a"/><rect x="0.7" y="0.7" width="8.1" height="6.8" fill="#2a2a2a"/><rect x="0.7" y="7.5" width="8.1" height="0.7" fill="#b0b0b0"/><path d="M1.6,2 L2.8,2.8 L1.6,3.6" stroke="#ccc" stroke-width="0.5" fill="none"/></svg>
<div class="tx" style="left:44.6px;top:487.99px;font-size:7.20px;line-height:8.64px;color:#2e2c2a;transform:scaleX(0.8475);transform-origin:0 0;">QTerminal</div>
<svg class="abs" style="left:127px;top:486.5px" width="10" height="10" viewBox="0 0 10 10">
<circle cx="5" cy="5" r="4.7" fill="#7eaee0"/><path d="M5,0.3 A4.7,4.7 0 0 1 9.1,2.7 L5,2.7z" fill="#b0d0f0"/>
<circle cx="5" cy="5" r="2.2" fill="#fff"/><circle cx="5" cy="5" r="1.6" fill="#4a8ad0"/></svg>
<div class="tx" style="left:139.4px;top:487.82px;font-size:7.38px;line-height:8.85px;color:#2e2c2a;transform:scaleX(0.8475);transform-origin:0 0;">New Tab - Chromium</div>
<svg class="abs" style="left:221px;top:485.5px" width="11" height="12" viewBox="0 0 11 12"><path d="M1.6,1.5 C1.1,3.5 1.6,5.8 3.2,7.2" stroke="#36a3e0" stroke-width="1.7" fill="none" stroke-linecap="round"/><path d="M8.4,4.6 C8.8,6.8 8.6,9 5.2,10.2" stroke="#36a3e0" stroke-width="1.7" fill="none" stroke-linecap="round"/><path d="M5.2,2.3 C6.5,1.6 8,1.3 9.8,1.8" stroke="#444" stroke-width="0.8" fill="none"/></svg>
<div class="tx" style="left:235px;top:487.88px;font-size:7.32px;line-height:8.78px;color:#2e2c2a;transform:scaleX(0.8475);transform-origin:0 0;">LxQt Appearance Configur...</div>
<svg class="abs" style="left:317px;top:485.5px" width="11" height="12" viewBox="0 0 11 12"><path d="M1.6,1.5 C1.1,3.5 1.6,5.8 3.2,7.2" stroke="#36a3e0" stroke-width="1.7" fill="none" stroke-linecap="round"/><path d="M8.4,4.6 C8.8,6.8 8.6,9 5.2,10.2" stroke="#36a3e0" stroke-width="1.7" fill="none" stroke-linecap="round"/><path d="M5.2,2.3 C6.5,1.6 8,1.3 9.8,1.8" stroke="#444" stroke-width="0.8" fill="none"/></svg>
<div class="tx" style="left:330px;top:487.93px;font-size:7.26px;line-height:8.71px;color:#2e2c2a;transform:scaleX(0.8475);transform-origin:0 0;">LXQt Powermanagement ...</div>
<svg class="abs" style="left:705.5px;top:485px" width="10" height="12" viewBox="0 0 10 12">
<path d="M2.5,4 C2.5,1 7.5,1 7.5,4" stroke="#777" stroke-width="0.9" fill="none"/>
<rect x="0.8" y="3.5" width="8.4" height="5.5" rx="0.8" fill="#9a9a9a"/>
<rect x="1.5" y="4.3" width="7" height="4" fill="#3a7ad0"/>
<path d="M3,5.5 h4 M3,7 h4" stroke="#fff" stroke-width="0.6"/>
<rect x="2.5" y="10" width="5" height="1" fill="#bbb"/>
</svg>
<svg class="abs" style="left:723.5px;top:486.5px" width="11" height="11" viewBox="0 0 11 11">
<defs><radialGradient id="tb1" cx="45%" cy="35%" r="65%"><stop offset="0" stop-color="#5ab8f8"/><stop offset="1" stop-color="#1060c0"/></radialGradient></defs>
<circle cx="5.5" cy="5.5" r="5.2" fill="url(#tb1)"/>
<path d="M2.5,4.5 C4.5,3 6.5,3 8.5,4.5 M3.5,6 C4.8,5 6.2,5 7.5,6" stroke="#fff" stroke-width="0.7" fill="none"/>
<path d="M5.5,6.5 L5.5,9" stroke="#fff" stroke-width="0.7"/>
</svg>
<svg class="abs" style="left:737px;top:488px" width="10" height="9" viewBox="0 0 10 9">
<rect x="0.5" y="0.5" width="8.5" height="6" fill="#5a2c48"/>
<rect x="1.5" y="3" width="8" height="5.5" fill="#f0f0f0" stroke="#666" stroke-width="0.4"/>
<rect x="2.3" y="3.8" width="6.4" height="4" fill="#40a8c8"/>
</svg>
<svg class="abs" style="left:753px;top:486px" width="11" height="11" viewBox="0 0 11 11">
<rect x="0.8" y="3.5" width="2.5" height="4" fill="#e8b838"/>
<path d="M3.3,3.5 L6.5,0.8 V10.2 L3.3,7.5z" fill="#e0e0e0" stroke="#888" stroke-width="0.5"/>
<path d="M8,3 C9.2,4.2 9.2,6.8 8,8" stroke="#4cc04c" stroke-width="0.8" fill="none"/>
</svg>
<div class="tx" style="left:771.5px;top:484.01px;font-size:6.96px;line-height:8.35px;color:#6a6865;transform:scaleX(0.8475);transform-origin:0 0;">04:30:11</div>
<div class="tx" style="left:770.6px;top:492.02px;font-size:5.90px;line-height:7.08px;color:#7c7a77;transform:scaleX(0.8475);transform-origin:0 0;">2014-05-06</div>
</body></html>
